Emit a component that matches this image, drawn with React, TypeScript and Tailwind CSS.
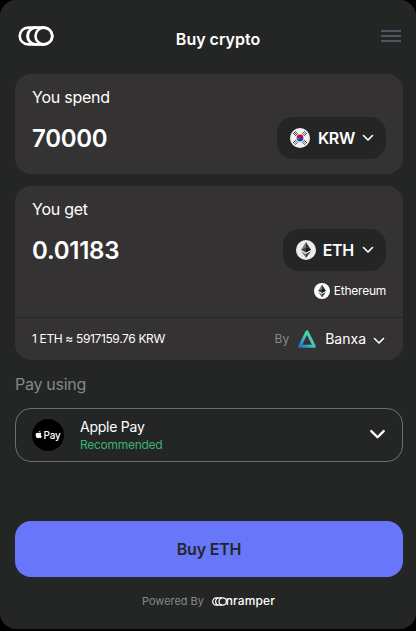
import { useState } from 'react'

function Chevron({ className, strokeWidth = 1.6 }: { className: string; strokeWidth?: number }) {
  return (
    <svg viewBox="0 0 12 8" className={className} fill="none" stroke="currentColor" strokeWidth={strokeWidth} strokeLinecap="round" strokeLinejoin="round">
      <path d="M1.5 1.5 6 6l4.5-4.5" />
    </svg>
  )
}

function Logo() {
  return (
    <svg viewBox="0 0 36 20" className="w-9 h-5" fill="none" stroke="#fff" strokeWidth="2.600">
      <rect x="1.700" y="1.600" width="32.600" height="16.800" rx="8.400" />
      <circle cx="25.900" cy="10" r="8.400" />
      <path d="M18 1.600a8.400 8.400 0 0 0 0 16.800" strokeWidth="3" />
      <path d="M18 1.800h8M18 18.200h8" />
    </svg>
  )
}

function KoreaFlag() {
  return (
    <svg viewBox="0 0 20 20" className="w-5 h-5">
      <circle cx="10" cy="10" r="10" fill="#f0f0f0" />
      <path d="M6.600 10a3.400 3.400 0 0 1 6.800 0z" fill="#d80027" />
      <path d="M6.600 10a3.400 3.400 0 0 0 6.800 0c-.6-.9-2.200-.6-3.400 0s-2.600.7-3.400 0z" fill="#0052b4" />
      <g stroke="#292929" strokeWidth="1">
        <path d="m3.100 5.900 2.500-2.600M4.200 6.900l2.500-2.600M5.300 7.900l2.500-2.600" />
        <path d="m14.400 3.300 2.500 2.600M13.300 4.300l2.500 2.600M12.200 5.300l2.500 2.600" strokeDasharray="1.600 .4" />
        <path d="m3.100 14.100 2.500 2.600M4.200 13.100l2.500 2.600M5.300 12.100l2.500 2.600" strokeDasharray="1.600 .4" />
        <path d="m14.400 16.700 2.500-2.600M13.300 15.700l2.500-2.600M12.200 14.700l2.500-2.600" strokeDasharray="1.600 .4" />
      </g>
    </svg>
  )
}

function EthIcon({ className, fill }: { className: string; fill: string }) {
  return (
    <svg viewBox="0 0 20 20" className={className}>
      <circle cx="10" cy="10" r="10" fill={fill} />
      <path d="M10 2v9.900l-4.800-2.100z" fill="#777" />
      <path d="M10 2l4.900 7.800-4.900 2.100z" fill="#343434" />
      <path d="m5.200 9.800 4.800-2v4.800z" fill="#3f3f3f" />
      <path d="m14.900 9.800-4.900-2v4.800z" fill="#171717" />
      <path d="m5.200 11.200 4.800 2.700V18z" fill="#777" />
      <path d="m14.900 11.200-4.900 2.700V18z" fill="#383838" />
    </svg>
  )
}

function BanxaIcon() {
  return (
    <svg viewBox="0 0 18 18" className="w-[18px] h-[18px]">
      <defs>
        <linearGradient id="banxa" x1="0" y1="1" x2="0.65" y2="0.35">
          <stop offset="0" stopColor="#1c74cf" />
          <stop offset="0.55" stopColor="#35b6c0" />
          <stop offset="1" stopColor="#48d2b0" />
        </linearGradient>
      </defs>
      <path d="M9 1.700 16.300 16.300H1.700z" fill="none" stroke="url(#banxa)" strokeWidth="3" strokeLinejoin="round" />
    </svg>
  )
}

function AppleIcon() {
  return (
    <svg viewBox="0 0 24 24" className="w-[8px] h-[9px] mb-px" fill="#fff">
      <path d="M17.600 12.700c0-2.700 2.200-4 2.300-4.100-1.300-1.800-3.200-2.100-3.900-2.100-1.700-.2-3.200 1-4.100 1s-2.100-1-3.500-.9C4.700 6.700 2 9.200 2 13.400 2 18 5 23 8 23c1.400 0 2-1 3.800-1s2.300 1 3.800.9c2.600 0 4.800-4.500 5-5.600-.1 0-3-1.200-3-4.600zM14.800 4.700C15.600 3.700 16.100 2.400 16 1c-1.200 0-2.600.8-3.400 1.700-.8.9-1.400 2.200-1.300 3.500 1.300.1 2.700-.6 3.500-1.500z" />
    </svg>
  )
}

function OnramperMark() {
  return (
    <svg viewBox="0 0 15 9" className="w-[15px] h-[9px] mt-px" fill="none" stroke="#fff" strokeWidth="1.300">
      <path d="M6 .8H4.400a3.700 3.700 0 0 0 0 7.400H6M7.300 .8a3.700 3.700 0 0 0 0 7.400M6 .8h4M6 8.200h4" />
      <circle cx="10.700" cy="4.500" r="3.700" />
    </svg>
  )
}

export default function App() {
  const [spend, setSpend] = useState('70000')

  return (
    <div className="h-[631px] w-[416px] bg-black font-['Inter',sans-serif]">
      <main className="flex h-[629px] flex-col rounded-[16px] bg-[#242625] pl-[15px] pr-[13px] text-white">
        {/* Header */}
        <header className="flex h-[74px] shrink-0 items-center justify-between pl-[3px] pr-0.5 pb-0.5">
          <Logo />
          <h1 className="pt-[5px] pl-px text-base leading-6 font-semibold">Buy crypto</h1>
          <button className="flex w-5 flex-col gap-[3px]" aria-label="Menu">
            <span className="h-0.5 bg-[#555463]" />
            <span className="h-0.5 bg-[#555463]" />
            <span className="h-0.5 bg-[#555463]" />
          </button>
        </header>

        {/* Amount in fiat */}
        <section className="h-[100px] shrink-0 rounded-[16px] bg-[#353233] px-[17px] pt-[11px]">
          <p className="text-base leading-6 tracking-[-0.25px]">You spend</p>
          <div className="mt-2 flex h-[42px] items-center justify-between">
            <input
              value={spend}
              onChange={(e) => setSpend(e.target.value)}
              aria-label="You spend"
              className="w-40 bg-transparent pt-0.5 text-2xl font-semibold tracking-[-0.3px] outline-none"
            />
            <button className="flex h-[42px] items-center rounded-[16px] bg-[#242625] pl-[13px] pr-3 text-base font-semibold">
              <KoreaFlag />
              <span className="ml-2 tracking-[-0.3px]">KRW</span>
              <Chevron className="ml-[7px] h-2 w-3" />
            </button>
          </div>
        </section>

        {/* Amount in crypto */}
        <section className="mt-3 flex h-[174px] shrink-0 flex-col rounded-[16px] bg-[#353233]">
          <div className="h-[131px] px-[17px] pt-[11px]">
            <p className="text-base leading-6 tracking-[-0.25px]">You get</p>
            <div className="mt-2 flex h-[42px] items-center justify-between">
              <span className="pt-0.5 text-2xl font-semibold tracking-[-0.25px]">0.01183</span>
              <button className="flex h-[42px] items-center rounded-[16px] bg-[#242625] pl-[13px] pr-3 text-base font-semibold">
                <EthIcon className="h-5 w-5" fill="#ececec" />
                <span className="ml-[7px] mr-px tracking-[-0.3px]">ETH</span>
                <Chevron className="ml-[7px] h-2 w-3" />
              </button>
            </div>
            <div className="mt-3 flex h-4 items-center justify-end gap-1 text-xs tracking-[-0.25px]">
              <EthIcon className="h-4 w-4" fill="#fff" />
              Ethereum
            </div>
          </div>
          <div className="flex flex-1 items-center justify-between border-t border-[#242625] px-[17px]">
            <span className="text-xs tracking-[-0.36px]">1 ETH ≈ 5917159.76 KRW</span>
            <button className="flex items-center text-sm">
              <span className="mr-[9px] text-xs text-[#828987]">By</span>
              <BanxaIcon />
              <span className="ml-[9px]">Banxa</span>
              <Chevron className="mt-1 mr-px ml-[7px] h-2 w-3" />
            </button>
          </div>
        </section>

        {/* Payment method */}
        <h2 className="mt-3 text-base leading-6 tracking-[-0.28px] text-[#828987]">Pay using</h2>
        <button className="mt-3 flex h-[54px] shrink-0 items-center rounded-[16px] border border-[#6e706f] px-4 text-left">
          <span className="flex h-8 w-8 items-center justify-center rounded-full bg-black text-[10px] font-medium tracking-[-0.2px]">
            <AppleIcon />
            Pay
          </span>
          <span className="ml-4 flex-1 pt-0.5">
            <span className="block text-sm leading-[18px] tracking-[-0.25px]">Apple Pay</span>
            <span className="block text-xs leading-[18px] tracking-[-0.27px] text-[#3cb371]">Recommended</span>
          </span>
          <Chevron className="mt-[-2px] h-[11px] w-[17px]" strokeWidth={1.7} />
        </button>

        <button className="mt-[59px] h-14 shrink-0 rounded-[16px] bg-[#6876f9] text-base font-semibold tracking-[-0.2px] text-[#242625]">
          Buy ETH
        </button>

        <footer className="mt-[15px] flex h-[18px] items-center justify-center pr-px text-[11px] text-[#828987]">
          <span className="tracking-[-0.05px]">Powered By</span>
          <span className="ml-2 flex items-center text-xs font-medium text-white">
            <OnramperMark />
            <span className="-ml-px tracking-[0.1px]">nramper</span>
          </span>
        </footer>
      </main>
    </div>
  )
}
